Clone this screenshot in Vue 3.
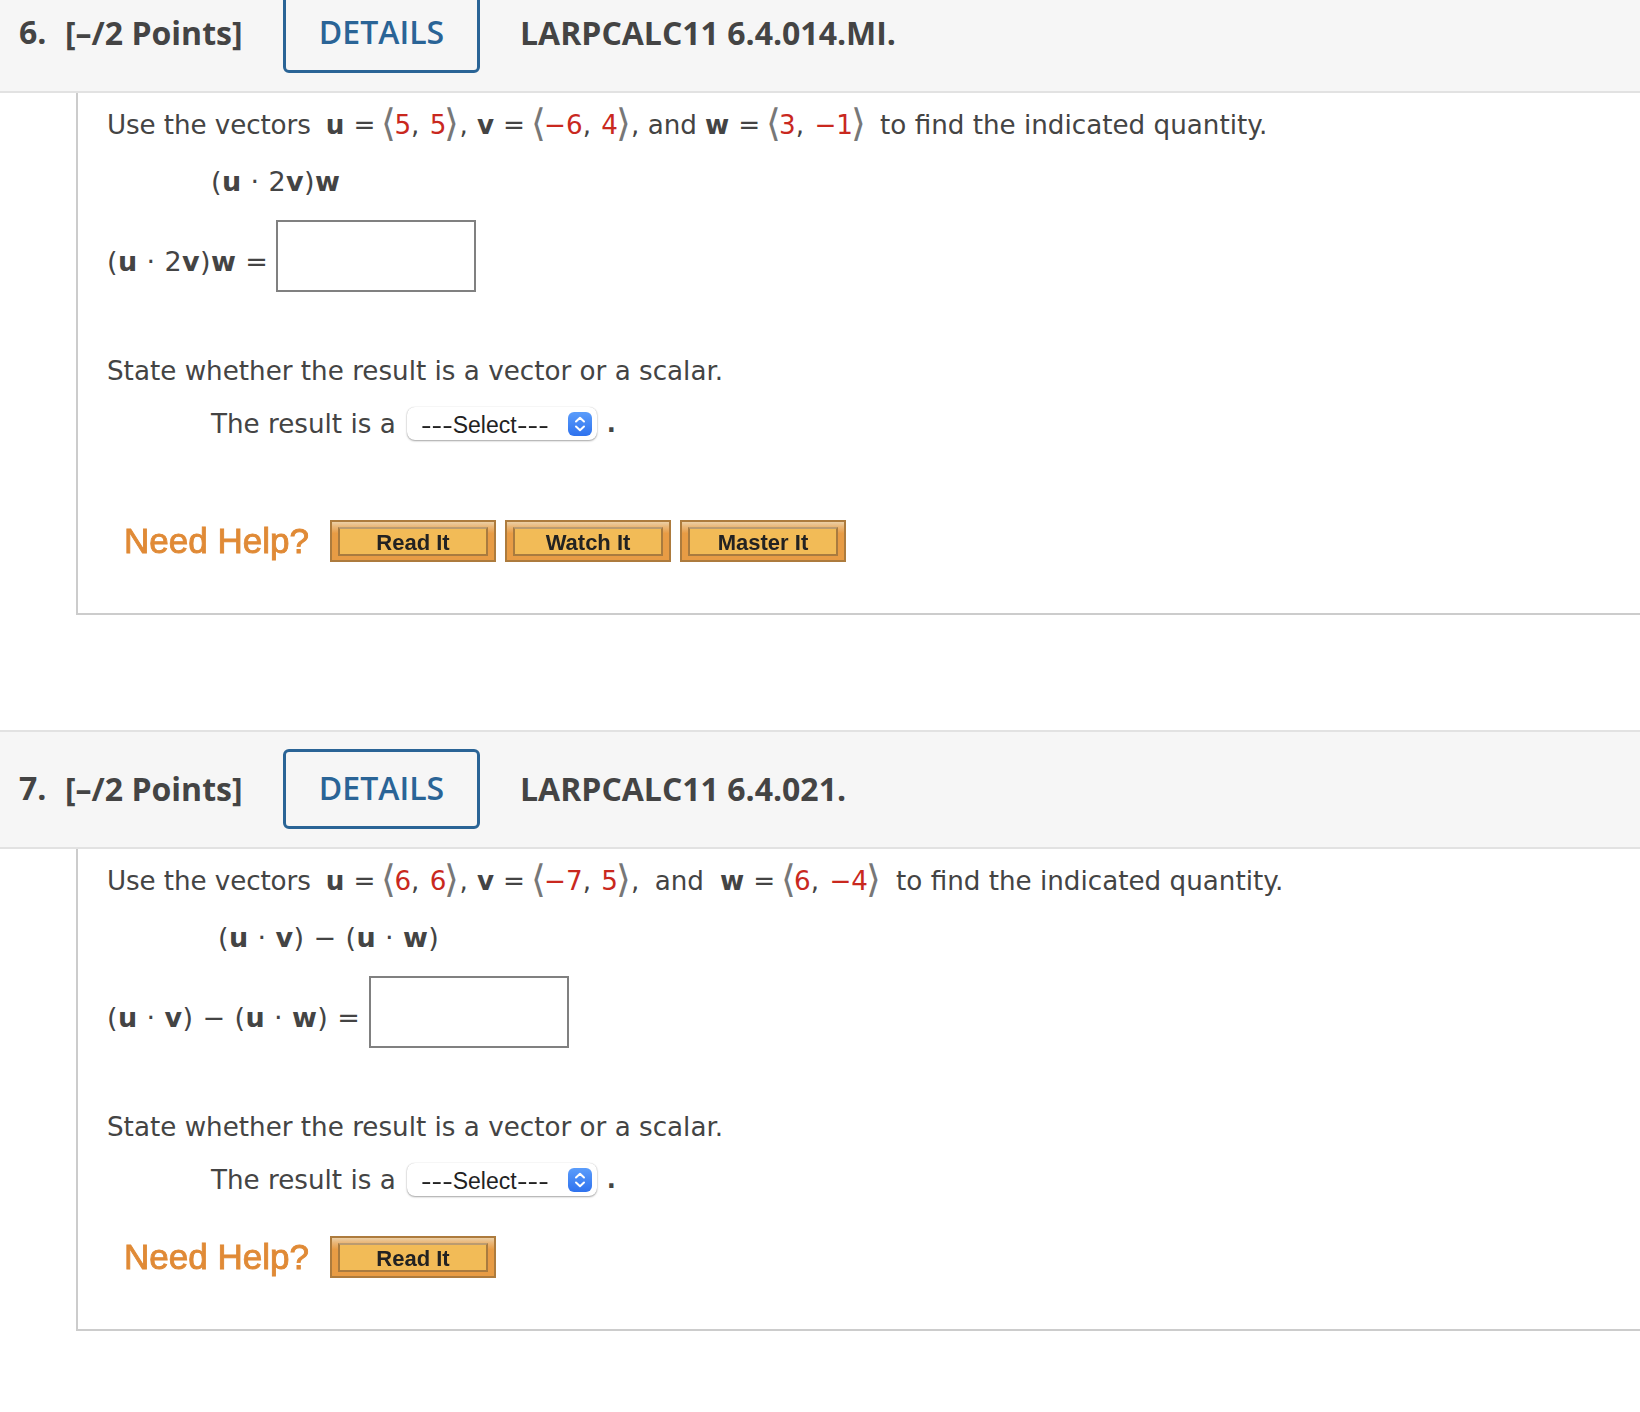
<script setup>
const questions = [
  {
    num: '6.', code: 'LARPCALC11 6.4.014.MI.', cls: 'q6',
    u: ['5', '5'], v: ['−6', '4'], w: ['3', '−1'],
    expr: 'a', help: ['Read It', 'Watch It', 'Master It']
  },
  {
    num: '7.', code: 'LARPCALC11 6.4.021.', cls: 'q7',
    u: ['6', '6'], v: ['−7', '5'], w: ['6', '−4'],
    expr: 'b', help: ['Read It']
  }
]
</script>

<template>
  <div class="page">
    <section v-for="q in questions" :key="q.num" class="question" :class="q.cls">
      <header class="head">
        <span class="num">{{ q.num }}</span>
        <span class="points">[–/2 Points]</span>
        <button class="details">DETAILS</button>
        <span class="code">{{ q.code }}</span>
      </header>
      <div class="body">
        <p class="row vectors">
          <span class="lead">Use the vectors</span>
          <b class="ub">u</b><span class="eq">=</span><span class="ang">⟨</span><i>{{ q.u[0] }}</i>, <i class="second">{{ q.u[1] }}</i><span class="ang close">⟩</span>,
          <b class="vb">v</b><span class="eq">=</span><span class="ang">⟨</span><i>{{ q.v[0] }}</i>, <i class="second">{{ q.v[1] }}</i><span class="ang close">⟩</span>,
          <span class="and">and</span>
          <b class="wb">w</b><span class="eq">=</span><span class="ang">⟨</span><i>{{ q.w[0] }}</i>, <i class="second">{{ q.w[1] }}</i><span class="ang close">⟩</span>
          <span class="tail">to find the indicated quantity.</span>
        </p>
        <p v-if="q.expr === 'a'" class="row formula">(<b>u</b> · 2<b>v</b>)<b>w</b></p>
        <p v-else class="row formula">(<b>u</b> · <b>v</b>) − (<b>u</b> · <b>w</b>)</p>
        <div class="answer">
          <span v-if="q.expr === 'a'" class="label">(<b>u</b> · 2<b>v</b>)<b>w</b> =</span>
          <span v-else class="label">(<b>u</b> · <b>v</b>) − (<b>u</b> · <b>w</b>) =</span>
          <input class="input" type="text" />
        </div>
        <p class="row state">State whether the result is a vector or a scalar.</p>
        <div class="result">
          <span>The result is a</span>
          <div class="select">
            <span class="selecttext"><span class="dash"><span class="dashfill">---</span></span>Select<span class="dash"><span class="dashfill">---</span></span></span>
            <span class="stepper">
              <svg width="24" height="24" viewBox="0 0 24 24" fill="none" stroke="#fff" stroke-width="2" stroke-linecap="round" stroke-linejoin="round">
                <path d="M8 9.5 12 5.8 16 9.5" />
                <path d="M8 14.5 12 18.2 16 14.5" />
              </svg>
            </span>
          </div>
          <span class="dot">.</span>
        </div>
        <div class="help">
          <span class="need">Need Help?</span>
          <div v-for="h in q.help" :key="h" class="hbtn"><span class="hinner">{{ h }}</span></div>
        </div>
      </div>
    </section>
  </div>
</template>

<style scoped>
.page {
  width: 1640px;
  height: 1412px;
  overflow: hidden;
  background: #fff;
  color: #444;
  font-family: "DejaVu Sans", Verdana, sans-serif;
}
.question.q6 { margin-top: -26px; margin-bottom: 115px; }
.head {
  height: 115px;
  background: #f6f6f6;
  border-top: 2px solid #e2e2e2;
  border-bottom: 2px solid #e2e2e2;
  display: flex;
  align-items: flex-end;
  font-family: "Open Sans", sans-serif;
  font-weight: 700;
  font-size: 32px;
  color: #444;
}
.num { width: 46px; margin-left: 19px; padding-bottom: 39px; line-height: 40px; }
.points { width: 218px; line-height: 40px; padding-bottom: 38px; white-space: nowrap; }
.details {
  width: 197px;
  height: 80px;
  margin-bottom: 18px;
  box-sizing: border-box;
  border: 3px solid #2a6496;
  border-radius: 6px;
  background: transparent;
  color: #2a6496;
  font-family: "Open Sans", sans-serif;
  font-weight: 600;
  font-size: 32px;
  padding: 0 0 3px;
}
.code { margin-left: 40px; line-height: 40px; padding-bottom: 38px; white-space: nowrap; }
.body {
  margin-left: 76px;
  border-left: 2px solid #ccc;
  border-bottom: 2px solid #ccc;
  padding-left: 29px;
  padding-bottom: 51px;
  font-size: 26.2px;
}
.row { margin: 0; white-space: pre-wrap; }
.vectors { height: 64px; line-height: 64px; white-space: nowrap; }
.vectors i { font-style: normal; color: #c9281e; }
.lead { letter-spacing: -0.1px; }
.second { margin-left: 2px; }
.ang { color: #777; font-size: 38px; line-height: 0; margin-left: 6px; margin-right: -2px; font-weight: 300; position: relative; top: 2px; }
.ang.close { margin-left: -2px; margin-right: 0; }
b { font-weight: 700; }
.ub { margin-left: 15px; }
.vb { margin-left: 1px; }
.and { margin-left: 0; }
.wb { margin-left: 8px; }
.q7 .and { margin-left: 7px; }
.q7 .wb { margin-left: 16px; }
.eq { margin-left: 9px; }
.tail { margin-left: 14px; }
.q7 .tail { margin-left: 15px; }
.formula { height: 50px; line-height: 50px; padding-left: 104px; font-size: 27px; letter-spacing: 0.4px; }
.q7 .formula { padding-left: 111px; }
.answer {
  display: flex;
  align-items: center;
  gap: 8px;
  height: 72px;
  margin-top: 13px;
}
.label { position: relative; top: 5px; font-size: 27px; letter-spacing: 0.4px; }
.q7 .answer { gap: 9px; }
.input {
  width: 200px;
  height: 72px;
  box-sizing: border-box;
  border: 2px solid #808080;
  background: #fff;
}
.state { height: 60px; line-height: 60px; margin-top: 49px; }
.result {
  display: flex;
  align-items: center;
  height: 33px;
  padding-left: 104px;
  margin-top: 6px;
}
.select {
  margin-left: 11px;
  width: 190px;
  height: 33px;
  box-sizing: border-box;
  border-radius: 8px;
  background: #fff;
  box-shadow: 0 1px 2px rgba(0, 0, 0, 0.35), 0 0 1px rgba(0, 0, 0, 0.2);
  display: flex;
  align-items: center;
  justify-content: space-between;
  padding: 0 5px 0 14px;
  font-family: "Liberation Sans", sans-serif;
  font-size: 23px;
  color: #222;
}
.selecttext { position: relative; top: 2px; white-space: nowrap; }
.dash { display: inline-block; width: 32px; }
.dashfill { display: inline-block; transform: scaleX(1.38); transform-origin: left center; }
.stepper {
  width: 24px;
  height: 24px;
  border-radius: 6px;
  background: linear-gradient(#5b9dfb, #2f72ee);
  display: block;
}
.stepper svg { display: block; }
.dot { margin-left: 10px; font-weight: 700; font-size: 24px; }
.help {
  display: flex;
  align-items: center;
  height: 42px;
  padding-left: 17px;
  margin-top: 80px;
}
.q7 .help { margin-top: 40px; }
.need {
  width: 206px;
  font-family: "Liberation Sans", sans-serif;
  font-size: 35px;
  color: #e08a36;
  -webkit-text-stroke: 0.9px #e08a36;
  filter: blur(0.5px);
  white-space: nowrap;
}
.hbtn {
  width: 166px;
  height: 42px;
  margin-right: 9px;
  box-sizing: border-box;
  border: 2px solid #ad7b3d;
  background: linear-gradient(#eccfa6 0, #eab779 12%, #e89c45 30%, #e89c45 100%);
  padding: 5px 6px 4px;
}
.hinner {
  display: block;
  height: 100%;
  box-sizing: border-box;
  border: 2px solid #a97b3f;
  border-top-color: #bb9b70;
  background: #f2bb57;
  text-align: center;
  line-height: 27px;
  font-family: "Liberation Sans", sans-serif;
  font-weight: 700;
  font-size: 22px;
  color: #222;
  filter: blur(0.4px);
}
</style>
